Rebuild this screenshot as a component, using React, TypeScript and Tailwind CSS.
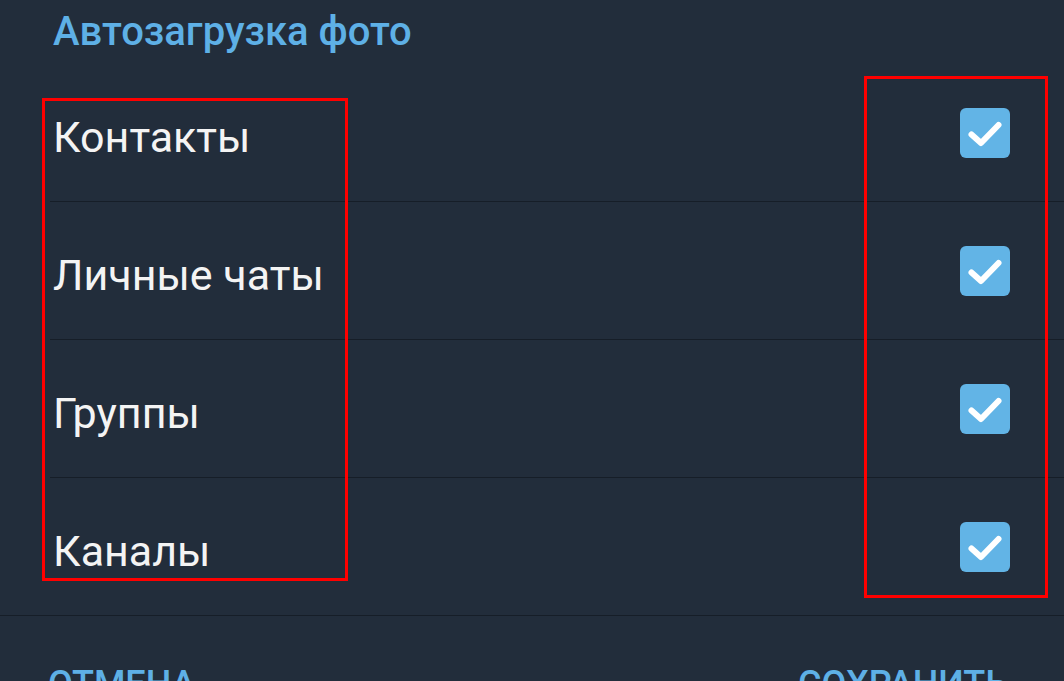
import React from 'react';

const items = ['Контакты', 'Личные чаты', 'Группы', 'Каналы'];

function CheckBox() {
  return (
    <div className="w-[50px] h-[50px] rounded-[6px] bg-[#62b4e6] flex items-center justify-center">
      <svg width="50" height="50" viewBox="0 0 50 50" fill="none">
        <path d="M11.5 26.5l9.5 8.5 17.5-18" stroke="#ffffff" strokeWidth="6" strokeLinecap="round" strokeLinejoin="round" />
      </svg>
    </div>
  );
}

export default function App() {
  return (
    <div className="relative w-[1064px] h-[681px] overflow-hidden bg-[#222d3b] font-['Roboto',sans-serif]">
      {/* Header */}
      <div className="h-[64px] pl-[53px] pt-[6px]">
        <h2 className="text-[40px] leading-[52px] font-medium text-[#5eb0e6]">Автозагрузка фото</h2>
      </div>

      {/* Rows */}
      <div>
        {items.map((label, i) => (
          <div key={label} className="relative h-[138px] pl-[53px] pr-[54px] flex items-center justify-between">
            <span className="text-[43px] leading-none text-[#f4f4f4] pt-[8px]">{label}</span>
            <CheckBox />
            {i < items.length - 1 ? (
              <div className="absolute left-[50px] right-0 bottom-0 h-px bg-[#161e28]" />
            ) : (
              <div className="absolute left-0 right-0 bottom-0 h-px bg-[#161e28]" />
            )}
          </div>
        ))}
      </div>

      {/* Footer */}
      <div className="flex justify-between pl-[48px] pr-[56px] pt-[50px]">
        <span className="text-[36px] leading-none font-medium text-[#5eb0e6]">ОТМЕНА</span>
        <span className="text-[36px] leading-none font-medium text-[#5eb0e6]">СОХРАНИТЬ</span>
      </div>

      {/* Annotation boxes */}
      <div className="absolute left-[42px] top-[98px] w-[306px] h-[483px] border-[3px] border-[#ff0000]" />
      <div className="absolute left-[864px] top-[76px] w-[184px] h-[522px] border-[3px] border-[#ff0000]" />
    </div>
  );
}
